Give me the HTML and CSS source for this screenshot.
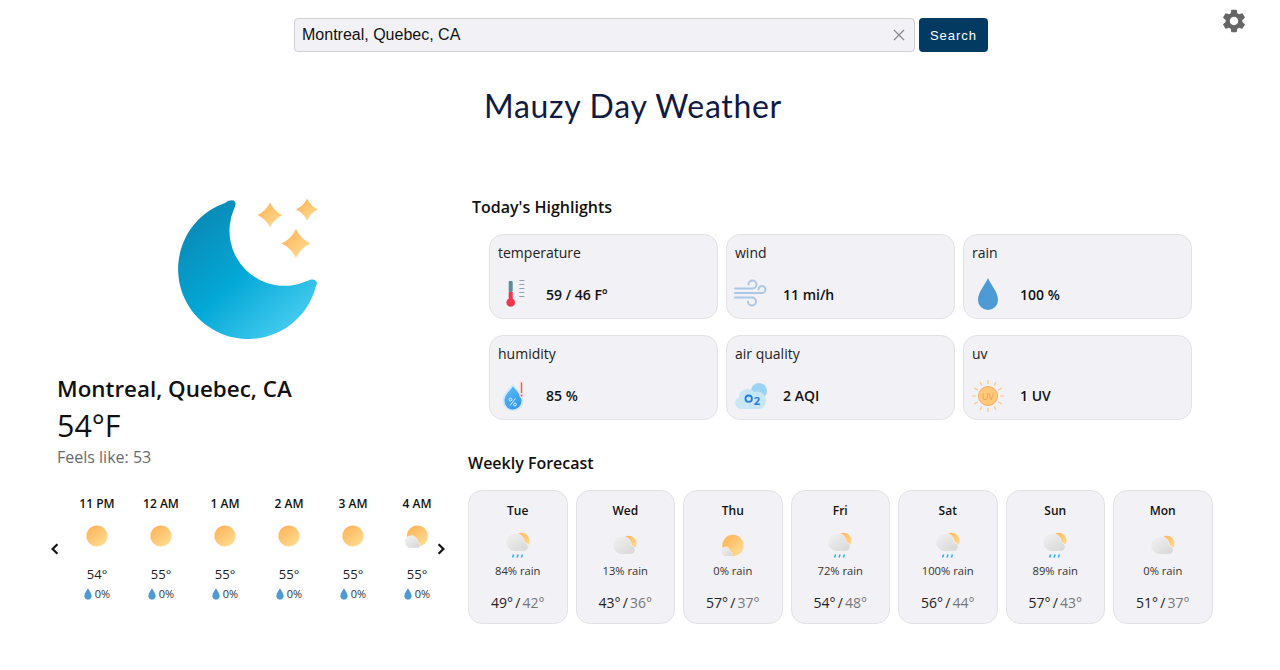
FILE: index.html
```html
<!DOCTYPE html>
<html lang="en">
<head>
    <meta charset="UTF-8">
    <meta name="viewport" content="width=device-width, initial-scale=1.0">
    <title>Mauzy Day Weather</title>
    <link rel="stylesheet" href="styles.css">
</head>
<body>
    <!-- shared gradients and icons -->
    <svg class="sprites" aria-hidden="true">
        <defs>
            <linearGradient id="grad-moon" x1="0.1" y1="0.05" x2="0.9" y2="0.95">
                <stop offset="0" stop-color="#0b86b2"/>
                <stop offset="0.5" stop-color="#03a8d6"/>
                <stop offset="1" stop-color="#4ed0f3"/>
            </linearGradient>
            <linearGradient id="grad-sun" x1="0.15" y1="0.1" x2="0.85" y2="0.9">
                <stop offset="0" stop-color="#ffb55a"/>
                <stop offset="1" stop-color="#ffdb92"/>
            </linearGradient>
            <linearGradient id="grad-cloud" x1="0.1" y1="0.1" x2="0.85" y2="0.9">
                <stop offset="0" stop-color="#f0f0f0"/>
                <stop offset="1" stop-color="#d9d9d9"/>
            </linearGradient>
            <linearGradient id="grad-drop" x1="0.2" y1="0" x2="0.8" y2="1">
                <stop offset="0" stop-color="#5cb8f5"/>
                <stop offset="1" stop-color="#2f97ea"/>
            </linearGradient>
            <path id="cloud-shape" d="M13 21.600A9.300 9.300 0 1 1 22.300 12.400A4.500 4.500 0 0 1 23 21.200Z" fill="url(#grad-cloud)" stroke="#f7f7f7" stroke-width="0.7"/>
            <path id="star-shape" d="M0-10Q3.200-3.200 10 0Q3.200 3.200 0 10Q-3.200 3.200-10 0Q-3.200-3.200 0-10Z" fill="url(#grad-sun)"/>
        </defs>
        <symbol id="i-sun" viewBox="0 0 24 24">
            <circle cx="12" cy="12" r="10.600" fill="url(#grad-sun)"/>
        </symbol>
        <symbol id="i-sun-cloud" viewBox="0 0 24 24">
            <circle cx="12.500" cy="12" r="10.600" fill="url(#grad-sun)"/>
            <use href="#cloud-shape" transform="translate(-2.500 9.500) scale(0.680)"/>
        </symbol>
        <symbol id="i-cloud-sun" viewBox="0 0 32 32">
            <circle cx="19.500" cy="13.700" r="8" fill="url(#grad-sun)"/>
            <use href="#cloud-shape" transform="translate(0 3)"/>
        </symbol>
        <symbol id="i-cloud-rain" viewBox="0 0 32 32">
            <circle cx="19.500" cy="10.700" r="8" fill="url(#grad-sun)"/>
            <use href="#cloud-shape"/>
            <path d="M11.600 24.500l-1 3M16 24.500l-1 3M20.400 24.500l-1 3" stroke="#1fb6f5" stroke-width="1.500" fill="none"/>
        </symbol>
        <symbol id="i-sun-small-cloud" viewBox="0 0 32 32">
            <circle cx="16" cy="15.500" r="10.700" fill="url(#grad-sun)"/>
            <use href="#cloud-shape" transform="translate(2.200 15.500) scale(0.500)"/>
        </symbol>
        <symbol id="i-drop" viewBox="0 0 22 32">
            <path d="M11 0C14 6 21 13 21 21A10 10.500 0 0 1 1 21C1 13 8 6 11 0Z" fill="#4d9ad4"/>
        </symbol>
    </svg>

    <header class="top">
        <form class="search">
            <div class="search-box">
                <input class="search-input" type="text" value="Montreal, Quebec, CA">
                <svg class="search-clear" viewBox="0 0 12 12"><path d="M1 1l10 10M11 1L1 11"/></svg>
            </div>
            <button class="search-btn" type="button">Search</button>
        </form>
        <svg class="gear" viewBox="0 0 24 24"><path d="M19.140 12.940c.04-.3.06-.61.06-.94 0-.32-.02-.64-.07-.94l2.030-1.580a.49.49 0 0 0 .12-.61l-1.920-3.320a.488.488 0 0 0-.59-.22l-2.390.96c-.5-.38-1.030-.7-1.620-.94l-.36-2.540a.484.484 0 0 0-.48-.41h-3.840c-.24 0-.43.17-.47.41l-.36 2.540c-.59.24-1.130.57-1.620.94l-2.390-.96c-.22-.08-.47 0-.59.22L2.740 8.870c-.12.21-.08.47.12.61l2.030 1.580c-.05.3-.09.63-.09.94s.02.64.07.94l-2.030 1.580a.49.49 0 0 0-.12.61l1.920 3.320c.12.22.37.29.59.22l2.390-.96c.5.38 1.030.7 1.620.94l.36 2.540c.05.24.24.41.48.41h3.840c.24 0 .44-.17.47-.41l.36-2.540c.59-.24 1.130-.56 1.620-.94l2.390.96c.22.08.47 0 .59-.22l1.920-3.320c.12-.22.07-.47-.12-.61l-2.010-1.580zM12 15.600c-1.980 0-3.600-1.620-3.600-3.600s1.620-3.600 3.600-3.600 3.600 1.620 3.600 3.600-1.620 3.600-3.600 3.600z"/></svg>
    </header>

    <h1 class="title">Mauzy Day Weather</h1>

    <main class="layout">
        <section class="current">
            <svg class="current-icon" viewBox="0 0 140 140">
                <path d="M47 3.900A70 70 0 1 0 138 87C141 81 135 78.500 129 82A55 55 0 0 1 56 10C60 3 56 -2 47 3.900Z" fill="url(#grad-moon)"/>
                <use href="#star-shape" transform="translate(92 16) scale(1.250)"/>
                <use href="#star-shape" transform="translate(129 10.500) scale(1.100)"/>
                <use href="#star-shape" transform="translate(118 44.500) scale(1.450)"/>
            </svg>
            <div class="current-info">
                <h2 class="city">Montreal, Quebec, CA</h2>
                <div class="temp">54°F</div>
                <div class="feels">Feels like: 53</div>
            </div>
            <div class="hourly">
                <svg class="arrow" viewBox="0 0 8 10"><path d="M6 1L2 5l4 4"/></svg>
                <div class="hour-list">
                    <div class="hour">
                        <div class="hour-time">11 PM</div>
                        <svg class="hour-icon"><use href="#i-sun"/></svg>
                        <div class="hour-temp">54°</div>
                        <div class="hour-rain"><svg class="hour-drop"><use href="#i-drop"/></svg>0%</div>
                    </div>
                    <div class="hour">
                        <div class="hour-time">12 AM</div>
                        <svg class="hour-icon"><use href="#i-sun"/></svg>
                        <div class="hour-temp">55°</div>
                        <div class="hour-rain"><svg class="hour-drop"><use href="#i-drop"/></svg>0%</div>
                    </div>
                    <div class="hour">
                        <div class="hour-time">1 AM</div>
                        <svg class="hour-icon"><use href="#i-sun"/></svg>
                        <div class="hour-temp">55°</div>
                        <div class="hour-rain"><svg class="hour-drop"><use href="#i-drop"/></svg>0%</div>
                    </div>
                    <div class="hour">
                        <div class="hour-time">2 AM</div>
                        <svg class="hour-icon"><use href="#i-sun"/></svg>
                        <div class="hour-temp">55°</div>
                        <div class="hour-rain"><svg class="hour-drop"><use href="#i-drop"/></svg>0%</div>
                    </div>
                    <div class="hour">
                        <div class="hour-time">3 AM</div>
                        <svg class="hour-icon"><use href="#i-sun"/></svg>
                        <div class="hour-temp">55°</div>
                        <div class="hour-rain"><svg class="hour-drop"><use href="#i-drop"/></svg>0%</div>
                    </div>
                    <div class="hour">
                        <div class="hour-time">4 AM</div>
                        <svg class="hour-icon"><use href="#i-sun-cloud"/></svg>
                        <div class="hour-temp">55°</div>
                        <div class="hour-rain"><svg class="hour-drop"><use href="#i-drop"/></svg>0%</div>
                    </div>
                </div>
                <svg class="arrow arrow-next" viewBox="0 0 8 10"><path d="M2 1l4 4-4 4"/></svg>
            </div>
        </section>

        <section class="details">
            <h3 class="section-title highlights-title">Today's Highlights</h3>
            <div class="highlights">
                <div class="card">
                    <div class="card-label">temperature</div>
                    <div class="card-row">
                        <svg class="card-icon" viewBox="0 0 32 32">
                            <rect x="9" y="0" width="7.500" height="24" rx="3.700" fill="#e8f4fd"/>
                            <circle cx="12.700" cy="23.500" r="5.700" fill="#e8f4fd"/>
                            <rect x="10.700" y="2" width="4" height="11" rx="1" fill="#5f8a96"/>
                            <rect x="10.700" y="13" width="4" height="10" fill="#f5364a"/>
                            <circle cx="12.700" cy="23.500" r="4.300" fill="#f5364a"/>
                            <path d="M21.300 1.500h5M21.300 5.500h5M21.300 9.500h5M21.300 13.500h5M21.300 17.500h5" stroke="#7c9aa3" stroke-width="0.900"/>
                        </svg>
                        <span class="card-value">59 / 46 F°</span>
                    </div>
                </div>
                <div class="card">
                    <div class="card-label">wind</div>
                    <div class="card-row">
                        <svg class="card-icon" viewBox="0 0 32 32">
                            <path d="M0 9.500H17.500A4 4 0 1 0 13.500 5.500M0 14H27A3.500 3.500 0 1 0 23.500 10.500M0 18.500H17A4 4 0 1 1 13 22.500" fill="none" stroke="#aac8e6" stroke-width="1.900" stroke-linecap="round"/>
                        </svg>
                        <span class="card-value">11 mi/h</span>
                    </div>
                </div>
                <div class="card">
                    <div class="card-label">rain</div>
                    <div class="card-row">
                        <svg class="card-icon" viewBox="0 0 32 32">
                            <path d="M16 -1C19 6 26 13 26 21A10 10 0 0 1 6 21C6 13 13 6 16 -1Z" fill="#4d9ad4"/>
                        </svg>
                        <span class="card-value">100 %</span>
                    </div>
                </div>
                <div class="card">
                    <div class="card-label">humidity</div>
                    <div class="card-row">
                        <svg class="card-icon" viewBox="0 0 32 32">
                            <path d="M15 4C18.500 9 25.500 14 25.500 20.500A10.500 10.500 0 0 1 4.500 20.500C4.500 14 11 9 15 4Z" fill="#cfe8fb"/>
                            <path d="M15 6.500C18 10.500 23.500 15 23.500 21A8.500 8.500 0 0 1 6.500 21C6.500 15 12 10.500 15 6.500Z" fill="url(#grad-drop)"/>
                            <path d="M12 25.500l5.500-7" stroke="#e6f4ff" stroke-width="0.900"/>
                            <circle cx="12.500" cy="19.500" r="1.400" fill="none" stroke="#e6f4ff" stroke-width="0.900"/>
                            <circle cx="17" cy="24.500" r="1.400" fill="none" stroke="#e6f4ff" stroke-width="0.900"/>
                            <rect x="21.500" y="1" width="4" height="17" rx="2" fill="#fde0dc"/>
                            <path d="M23.500 2.500V13" stroke="#f2565c" stroke-width="1.300"/>
                            <circle cx="23.500" cy="15.500" r="1" fill="#f2565c"/>
                        </svg>
                        <span class="card-value">85 %</span>
                    </div>
                </div>
                <div class="card">
                    <div class="card-label">air quality</div>
                    <div class="card-row">
                        <svg class="card-icon" viewBox="0 0 32 32">
                            <circle cx="24" cy="11" r="8" fill="#9dd3f2"/>
                            <path d="M6 29A6 6 0 0 1 4 17.500A8.500 8.500 0 0 1 19 12A8.500 8.500 0 0 1 25 29Z" fill="#c9e6f7"/>
                            <circle cx="13.700" cy="18.700" r="3.200" fill="none" stroke="#1d7fe6" stroke-width="1.800"/>
                            <text class="o2-text" x="18.800" y="24.500">2</text>
                        </svg>
                        <span class="card-value">2 AQI</span>
                    </div>
                </div>
                <div class="card">
                    <div class="card-label">uv</div>
                    <div class="card-row">
                        <svg class="card-icon" viewBox="0 0 32 32">
                            <circle cx="16" cy="16" r="9.500" fill="#ffc978" stroke="#f9a95c" stroke-width="1"/>
                            <path d="M16 0v4M16 28v4M0 16h4M28 16h4M8 2.100l2 3.500M22 26.400l2 3.500M2.100 8l3.500 2M26.400 22l3.500 2M24 2.100l-2 3.500M10 26.400l-2 3.500M29.900 8l-3.500 2M5.600 22l-3.500 2" stroke="#fdbf86" stroke-width="1.100"/>
                            <text class="uv-text" x="16" y="19.500">UV</text>
                        </svg>
                        <span class="card-value">1 UV</span>
                    </div>
                </div>
            </div>

            <h3 class="section-title weekly-title">Weekly Forecast</h3>
            <div class="weekly">
                <div class="day">
                    <div class="day-name">Tue</div>
                    <svg class="day-icon"><use href="#i-cloud-rain"/></svg>
                    <div class="day-rain">84% rain</div>
                    <div class="day-temp">49° / <span class="low">42°</span></div>
                </div>
                <div class="day">
                    <div class="day-name">Wed</div>
                    <svg class="day-icon"><use href="#i-cloud-sun"/></svg>
                    <div class="day-rain">13% rain</div>
                    <div class="day-temp">43° / <span class="low">36°</span></div>
                </div>
                <div class="day">
                    <div class="day-name">Thu</div>
                    <svg class="day-icon"><use href="#i-sun-small-cloud"/></svg>
                    <div class="day-rain">0% rain</div>
                    <div class="day-temp">57° / <span class="low">37°</span></div>
                </div>
                <div class="day">
                    <div class="day-name">Fri</div>
                    <svg class="day-icon"><use href="#i-cloud-rain"/></svg>
                    <div class="day-rain">72% rain</div>
                    <div class="day-temp">54° / <span class="low">48°</span></div>
                </div>
                <div class="day">
                    <div class="day-name">Sat</div>
                    <svg class="day-icon"><use href="#i-cloud-rain"/></svg>
                    <div class="day-rain">100% rain</div>
                    <div class="day-temp">56° / <span class="low">44°</span></div>
                </div>
                <div class="day">
                    <div class="day-name">Sun</div>
                    <svg class="day-icon"><use href="#i-cloud-rain"/></svg>
                    <div class="day-rain">89% rain</div>
                    <div class="day-temp">57° / <span class="low">43°</span></div>
                </div>
                <div class="day">
                    <div class="day-name">Mon</div>
                    <svg class="day-icon"><use href="#i-cloud-sun"/></svg>
                    <div class="day-rain">0% rain</div>
                    <div class="day-temp">51° / <span class="low">37°</span></div>
                </div>
            </div>
        </section>
    </main>
</body>
</html>
```

FILE: styles.css
```css
/* Reset */
* {
    margin: 0;
    padding: 0;
    box-sizing: border-box;
}

body {
    font-family: "Open Sans", sans-serif;
    color: #111;
    background-color: #ffffff;
}

.sprites {
    position: absolute;
    width: 0;
    height: 0;
}

/* Top bar */
.top {
    position: relative;
    padding: 18px 0 0 2px;
    display: flex;
    justify-content: center;
}

.search {
    display: flex;
    gap: 4px;
}

.search-box {
    display: flex;
    align-items: center;
    width: 621px;
    height: 34px;
    padding: 0 9px 0 7px;
    background-color: #f2f1f6;
    border: 1px solid #cfcfd3;
    border-radius: 4px;
}

.search-input {
    flex: 1;
    border: none;
    outline: none;
    background: transparent;
    font-family: "Liberation Sans", Arial, sans-serif;
    font-size: 16px;
    color: #111;
}

.search-clear {
    width: 12px;
    height: 12px;
    fill: none;
    stroke: #8a8a8e;
    stroke-width: 1.300;
}

.search-btn {
    width: 69px;
    height: 34px;
    border: none;
    border-radius: 4px;
    background-color: #023a62;
    color: white;
    font-family: "Liberation Sans", Arial, sans-serif;
    font-size: 13px;
    letter-spacing: 1px;
}

.gear {
    position: absolute;
    top: 7px;
    right: 32px;
    width: 28px;
    height: 28px;
    fill: #666666;
}

.title {
    margin-top: 31px;
    margin-right: 14px;
    text-align: center;
    font-family: Lato, sans-serif;
    font-size: 32px;
    font-weight: 400;
    line-height: 46px;
    letter-spacing: 0.700px;
    color: #101a42;
}

/* Page columns */
.layout {
    display: grid;
    grid-template-columns: 468px 744.500px;
    margin-top: 54px;
}

/* Left column */
.current {
    padding-top: 16px;
}

.current-icon {
    display: block;
    width: 140px;
    height: 140px;
    margin-left: 178px;
    overflow: visible;
}

.current-info {
    margin: 35px 0 0 57px;
}

.city {
    font-size: 22.400px;
    font-weight: 600;
    line-height: 30px;
}

.temp {
    font-size: 30.400px;
    line-height: 44px;
}

.feels {
    margin-top: -2px;
    font-size: 16px;
    line-height: 22px;
    color: #666b73;
}

.hourly {
    display: flex;
    align-items: center;
    margin: 27px 0 0 45px;
}

.arrow {
    width: 20px;
    height: 12px;
    margin-top: 2px;
    fill: none;
    stroke: #111;
    stroke-width: 1.800;
    flex-shrink: 0;
}

.hour-list {
    display: flex;
    width: 366px;
    overflow: hidden;
}

.hour {
    flex: 0 0 64px;
    text-align: center;
}

.hour-time {
    font-size: 12px;
    font-weight: 600;
    line-height: 18px;
}

.hour-icon {
    display: block;
    width: 24px;
    height: 24px;
    margin: 11px auto 0;
}

.hour-temp {
    margin-top: 17px;
    font-size: 13px;
    line-height: 18px;
    color: #222;
}

.hour-rain {
    display: flex;
    justify-content: center;
    align-items: center;
    gap: 3px;
    margin-top: 4px;
    font-size: 11px;
    line-height: 14px;
    color: #333;
}

.hour-drop {
    width: 8px;
    height: 12px;
}

/* Right column */
.details {
    padding-top: 13px;
}

.section-title {
    font-size: 16px;
    font-weight: 600;
    line-height: 22px;
}

.highlights-title {
    margin-left: 4px;
}

.highlights {
    display: grid;
    grid-template-columns: repeat(3, 229px);
    gap: 16px 8px;
    margin: 16px 0 0 21px;
}

.card {
    height: 85px;
    padding: 8px;
    background-color: #f2f1f6;
    border: 1px solid #e2e2e6;
    border-radius: 14px;
}

.card-label {
    font-size: 14px;
    line-height: 20px;
    color: #222;
}

.card-row {
    display: flex;
    align-items: center;
    gap: 16px;
    margin-top: 16px;
}

.card-icon {
    width: 32px;
    height: 32px;
    flex-shrink: 0;
    overflow: visible;
}

.card-value {
    margin-top: -2px;
    font-size: 14px;
    font-weight: 600;
}

.o2-text {
    font-family: "Open Sans", sans-serif;
    font-size: 11px;
    font-weight: 700;
    fill: #1d7fe6;
}

.uv-text {
    font-family: "Open Sans", sans-serif;
    font-size: 9px;
    text-anchor: middle;
    fill: #f29a55;
}

.weekly-title {
    margin-top: 32px;
}

.weekly {
    display: grid;
    grid-template-columns: repeat(7, 1fr);
    gap: 8px;
    margin-top: 16px;
}

.day {
    height: 134px;
    padding-top: 11px;
    text-align: center;
    background-color: #f2f1f6;
    border: 1px solid #e2e2e6;
    border-radius: 14px;
}

.day-name {
    font-size: 12px;
    font-weight: 600;
    line-height: 18px;
}

.day-icon {
    display: block;
    width: 32px;
    height: 32px;
    margin: 10px auto 0;
}

.day-rain {
    margin-top: 2px;
    font-size: 11.200px;
    line-height: 14px;
    color: #333;
}

.day-temp {
    margin-top: 15px;
    font-size: 14px;
    line-height: 20px;
    word-spacing: -1.500px;
    color: #222;
}

.low {
    color: #777;
}
```
